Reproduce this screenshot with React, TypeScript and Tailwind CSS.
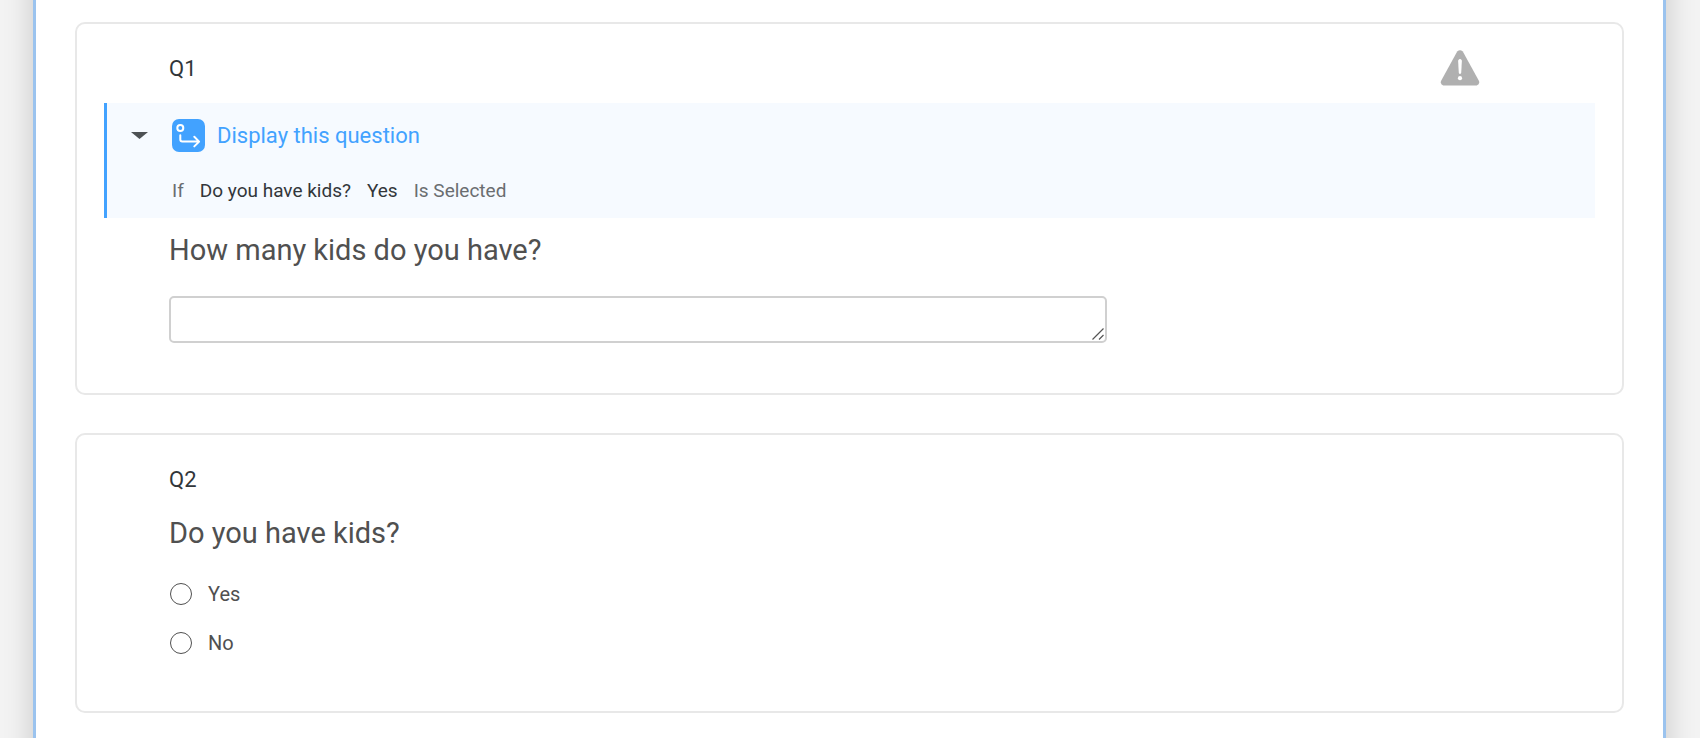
import type { ReactNode } from "react";

const choices = ["Yes", "No"];

const QuestionCard = ({ children }: { children: ReactNode }) => (
  <section className="rounded-[10px] border-2 border-[#e8e8e8] bg-white px-[27px]">{children}</section>
);

const WarningIcon = () => (
  <svg width="40" height="38" viewBox="0 0 40 38" aria-hidden="true">
    <path d="M17.2 1.6Q20 -1.2 22.8 1.6L39 31Q40 34.6 36.8 35.4H3.2Q0 34.6 1 31Z" fill="#b0b0b0" />
    <path d="M18.1 10.4Q20 7.6 21.9 10.4L21.2 23Q20 25 18.8 23Z" fill="#fff" />
    <circle cx="20" cy="28.2" r="2.1" fill="#fff" />
  </svg>
);

const LogicIcon = () => (
  <svg width="33" height="33" viewBox="0 0 33 33" fill="none" stroke="#fff" strokeWidth="2" aria-hidden="true">
    <rect width="33" height="33" rx="7" fill="#42a2ff" stroke="none" />
    <circle cx="8.3" cy="9" r="3" />
    <path d="M8.3 16.2V20.6Q8.3 22.6 10.3 22.6H26.6M22.3 17.8L27.1 22.6L22.3 27.4" strokeLinecap="round" strokeLinejoin="round" />
  </svg>
);

const App = () => {
  return (
    <div className="min-h-screen flex overflow-hidden bg-[#f3f3f3] font-['Roboto',sans-serif]">
      <main className="grow -my-10 ml-[33px] mr-[34px] px-[39px] pt-[62px] pb-[64px] border-x-[3px] border-[#9bc3ee] bg-white shadow-[0_0_28px_rgba(0,0,0,0.18)] flex flex-col gap-[38px]">
        {/* open question */}
        <QuestionCard>
          <div className="flex items-center justify-between pl-[65px] pr-[115px] pt-[26px]">
            <h2 className="text-[22px] leading-[38px] text-[#32363a]">Q1</h2>
            <button type="button" aria-label="Question warning">
              <WarningIcon />
            </button>
          </div>
          <div className="mt-[15px] h-[115px] border-l-[3px] border-[#42a2ff] bg-[#f6faff]">
            <button type="button" aria-expanded="true" className="flex items-center pl-[24px] pt-[16px]">
              <svg width="17" height="7" viewBox="0 0 17 7" aria-hidden="true">
                <path d="M0 0H17L8.5 7Z" fill="#4d5154" />
              </svg>
              <span className="pl-[24px]">
                <LogicIcon />
              </span>
              <span className="pl-[12px] text-[22px] leading-[33px] text-[#42a2ff]">Display this question</span>
            </button>
            <p className="flex gap-x-[16px] pl-[65px] pt-[24px] text-[19px] leading-[30px] text-[#6a6d70]">
              <span>If</span>
              <span className="text-[#32363a]">Do you have kids?</span>
              <span className="text-[#32363a]">Yes</span>
              <span>Is Selected</span>
            </p>
          </div>
          <div className="pl-[65px] pr-[113px] pt-[14px] pb-[50px]">
            <label htmlFor="kids-count" className="block text-[29px] leading-[36px] text-[#505050]">
              How many kids do you have?
            </label>
            <div className="relative mt-[28px] w-5/7">
              <textarea
                id="kids-count"
                rows={1}
                className="block h-[47px] w-full resize-none rounded-[5px] border-2 border-[#d0d0d0] bg-white"
              />
              <svg className="pointer-events-none absolute right-[3px] bottom-[3px]" width="12" height="12" viewBox="0 0 12 12" aria-hidden="true">
                <path d="M0.5 11.5L11.5 0.5M7 11.5L11.5 7" stroke="#555" strokeWidth="1.2" />
              </svg>
            </div>
          </div>
        </QuestionCard>
        {/* multiple choice question */}
        <QuestionCard>
          <div className="pl-[65px] pr-[113px] pt-[26px] pb-[44px]">
            <h2 className="text-[22px] leading-[38px] text-[#32363a]">Q2</h2>
            <fieldset>
              <legend className="pt-[16px] text-[29px] leading-[36px] text-[#505050]">Do you have kids?</legend>
              <div className="pt-[18px]">
                {choices.map((choice) => (
                  <label key={choice} className="flex h-[49px] items-center gap-x-[16px] text-[20px] leading-[28px] text-[#505050]">
                    <input type="radio" name="kids" value={choice} className="ml-px size-[22px] appearance-none rounded-full border border-[#505050]" />
                    {choice}
                  </label>
                ))}
              </div>
            </fieldset>
          </div>
        </QuestionCard>
      </main>
    </div>
  );
};

export default App;
